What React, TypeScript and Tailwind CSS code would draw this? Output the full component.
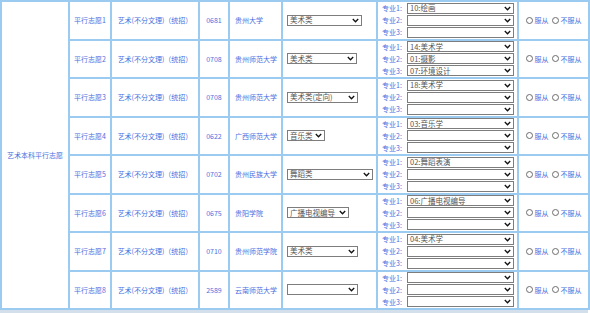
import React from 'react';

interface Choice {
  no: number;
  code: string;
  school: string;
  cat: string;
  catW: string;
  majors: string[];
}

const rows: Choice[] = [
  { no: 1, code: '0681', school: '贵州大学', cat: '美术类', catW: 'w-[75px]', majors: ['10:绘画', '', ''] },
  { no: 2, code: '0708', school: '贵州师范大学', cat: '美术类', catW: 'w-[70px]', majors: ['14:美术学', '01:摄影', '07:环境设计'] },
  { no: 3, code: '0708', school: '贵州师范大学', cat: '美术类(定向)', catW: 'w-[71px]', majors: ['18:美术学', '', ''] },
  { no: 4, code: '0622', school: '广西师范大学', cat: '音乐类', catW: 'w-[38px]', majors: ['03:音乐学', '', ''] },
  { no: 5, code: '0702', school: '贵州民族大学', cat: '舞蹈类', catW: 'w-[86px]', majors: ['02:舞蹈表演', '', ''] },
  { no: 6, code: '0675', school: '贵阳学院', cat: '广播电视编导', catW: 'w-[62px]', majors: ['06:广播电视编导', '', ''] },
  { no: 7, code: '0710', school: '贵州师范学院', cat: '美术类', catW: 'w-[71px]', majors: ['04:美术学', '', ''] },
  { no: 8, code: '2589', school: '云南师范大学', cat: '', catW: 'w-[71px]', majors: ['', '', ''] },
];

const Chevron = () => (
  <svg width="7" height="5" viewBox="0 0 7 5" className="shrink-0">
    <path d="M0.8 1 L3.5 3.8 L6.2 1" fill="none" stroke="#111" strokeWidth="1.3" />
  </svg>
);

const FakeSelect = ({ value, width }: { value: string; width: string }) => (
  <div className={`${width} h-[11px] border border-[#7d7d7d] bg-white flex items-center justify-between gap-[1px] pl-[2px] pr-[2px] text-[#555]`}>
    <span className="whitespace-nowrap text-[7.5px] leading-[10px]">{value}</span>
    <Chevron />
  </div>
);

const Radio = ({ label }: { label: string }) => (
  <span className="inline-flex items-center gap-[2px]">
    <span className="w-[7px] h-[7px] rounded-full border border-[#6b6b6b] bg-white inline-block" />
    <span>{label}</span>
  </span>
);

const cell = 'border-2 border-[#9ccbf2] align-middle';

export default function App() {
  return (
    <div
      className="w-[590px] h-[313px] overflow-hidden bg-white text-[7px] text-[#4a6fe0]"
      style={{ fontFamily: '"Noto Sans CJK SC", "Noto Sans", sans-serif' }}
    >
      <table className="table-fixed border-collapse w-[588px]">
        <colgroup>
          <col className="w-[68px]" />
          <col className="w-[42px]" />
          <col className="w-[88px]" />
          <col className="w-[30px]" />
          <col className="w-[53px]" />
          <col className="w-[95px]" />
          <col className="w-[141px]" />
          <col className="w-[71px]" />
        </colgroup>
        <tbody>
          {rows.map((r, i) => (
            <tr key={r.no} className="h-[38.5px]">
              {i === 0 && (
                <td rowSpan={8} className={`${cell} text-center`}>
                  艺术本科平行志愿
                </td>
              )}
              <td className={`${cell} text-center`}>平行志愿{r.no}</td>
              <td className={`${cell} text-center`}>艺术(不分文理)（统招）</td>
              <td className={`${cell} text-center`}>{r.code}</td>
              <td className={`${cell} pl-[5px]`}>{r.school}</td>
              <td className={`${cell} pl-[4px]`}>
                <FakeSelect value={r.cat} width={r.catW} />
              </td>
              <td className={`${cell} pl-[4px] py-0`}>
                <div className="flex flex-col gap-[1px]">
                  {r.majors.map((m, k) => (
                    <div key={k} className="flex items-center">
                      <span className="w-[25px] shrink-0">专业{k + 1}:</span>
                      <FakeSelect value={m} width="w-[107px]" />
                    </div>
                  ))}
                </div>
              </td>
              <td className={`${cell} text-center`}>
                <div className="flex items-center justify-center gap-[3px]">
                  <Radio label="服从" />
                  <Radio label="不服从" />
                </div>
              </td>
            </tr>
          ))}
        </tbody>
      </table>
      <div className="h-[6px] w-[588px] bg-[#d3dfeb]" />
    </div>
  );
}
